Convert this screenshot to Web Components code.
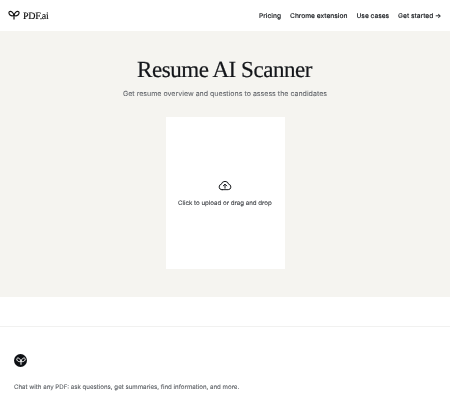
<!DOCTYPE html>
<html lang="en">
<head>
<meta charset="utf-8">
<title>Resume AI Scanner</title>
<style>
  html, body { margin: 0; background: #fff; }
  body { font-family: Inter, "Liberation Sans", sans-serif; overflow: hidden; text-rendering: geometricPrecision; }
</style>
</head>
<body>
<site-header></site-header>
<scanner-hero heading="Resume AI Scanner" sub="Get resume overview and questions to assess the candidates"></scanner-hero>
<site-footer></site-footer>

<script>
const SPROUT = `
  <path d="M12 21V12.500" />
  <path d="M12 12.500C10.500 7 6.500 4 3.500 5 1 6 1.500 10 4 12c2.500 2 6 2 8 .5z" />
  <path d="M12 12.500C13.500 7 17.500 4 20.500 5 23 6 22.500 10 20 12c-2.500 2-6 2-8 .5z" />
`;

class SiteHeader extends HTMLElement {
  constructor() {
    super();
    this.attachShadow({ mode: "open" });
  }

  connectedCallback() {
    this.shadowRoot.innerHTML = `
      <style>
        :host {
          display: flex;
          align-items: center;
          justify-content: space-between;
          box-sizing: border-box;
          height: 31px;
          padding: 1px 9px 0 8px;
          background: #fff;
        }
        .brand { display: flex; align-items: center; gap: 3px; }
        .brand svg { width: 12px; height: 12px; margin-top: -2px; fill: none; stroke: #111; stroke-width: 2.400; }
        .brand span {
          font: 400 10px "Liberation Serif", serif;
          color: #111;
          letter-spacing: -0.3px;
          -webkit-text-stroke: 0.15px #111;
          will-change: transform;
        }
        nav { display: flex; gap: 9px; will-change: transform; }
        a {
          font: 500 6.600px Inter, "Liberation Sans", sans-serif;
          color: #15181c;
          -webkit-text-stroke: 0.1px #15181c;
          text-decoration: none;
        }
      </style>
      <div class="brand">
        <svg viewBox="0 0 24 24">${SPROUT}</svg>
        <span>PDF.ai</span>
      </div>
      <nav>
        <a href="#">Pricing</a>
        <a href="#">Chrome extension</a>
        <a href="#">Use cases</a>
        <a href="#">Get started →</a>
      </nav>
    `;
  }
}

class ScannerHero extends HTMLElement {
  constructor() {
    super();
    this.attachShadow({ mode: "open" });
  }

  connectedCallback() {
    this.shadowRoot.innerHTML = `
      <style>
        :host {
          display: flex;
          flex-direction: column;
          align-items: center;
          box-sizing: border-box;
          height: 266px;
          padding-top: 25px;
          background: #f5f4f0;
        }
        h1 {
          margin: 0;
          font: 400 23px/28px "Liberation Serif", serif;
          color: #14161a;
          letter-spacing: -0.450px;
          -webkit-text-stroke: 0.2px #14161a;
          will-change: transform;
        }
        p {
          margin: 4px 0 0;
          font: 400 7.050px/12px Inter, "Liberation Sans", sans-serif;
          color: #63666b;
          -webkit-text-stroke: 0.08px #63666b;
          will-change: transform;
        }
        upload-box { margin-top: 17px; }
      </style>
      <h1>${this.getAttribute("heading")}</h1>
      <p>${this.getAttribute("sub")}</p>
      <upload-box></upload-box>
    `;
  }
}

class UploadBox extends HTMLElement {
  constructor() {
    super();
    this.attachShadow({ mode: "open" });
  }

  connectedCallback() {
    this.shadowRoot.innerHTML = `
      <style>
        :host {
          display: flex;
          flex-direction: column;
          align-items: center;
          justify-content: center;
          gap: 7px;
          width: 119px;
          height: 152px;
          background: #fff;
        }
        svg { width: 14px; height: 14px; fill: none; stroke: #15171a; stroke-width: 1.700; stroke-linecap: round; stroke-linejoin: round; }
        span { font: 400 6.150px/10px Inter, "Liberation Sans", sans-serif; color: #33363b; -webkit-text-stroke: 0.08px #33363b; white-space: nowrap; will-change: transform; }
      </style>
      <svg viewBox="0 0 24 24">
        <path d="M7 20H6.500a4.700 4.700 0 0 1-.8-9.300 6.500 6.500 0 0 1 12.600 0 4.700 4.700 0 0 1-.8 9.300H7z" />
        <path d="M12 17.500v-6.500M9 13.500l3-3 3 3" />
      </svg>
      <span>Click to upload or drag and drop</span>
    `;
  }
}

class SiteFooter extends HTMLElement {
  constructor() {
    super();
    this.attachShadow({ mode: "open" });
  }

  connectedCallback() {
    this.shadowRoot.innerHTML = `
      <style>
        :host {
          display: block;
          box-sizing: border-box;
          margin-top: 29px;
          padding: 27px 14px 0;
          border-top: 1px solid #f1f1f0;
        }
        .mark {
          display: flex;
          align-items: center;
          justify-content: center;
          width: 13px;
          height: 13px;
          border-radius: 50%;
          background: #0d1014;
        }
        .mark svg { width: 10px; height: 10px; fill: none; stroke: #fff; stroke-width: 2.400; }
        p {
          margin: 15px 0 0;
          padding-top: 1px;
          font: 400 6.150px/10px Inter, "Liberation Sans", sans-serif;
          color: #55595e;
          -webkit-text-stroke: 0.08px #55595e;
          will-change: transform;
        }
      </style>
      <div class="mark"><svg viewBox="0 0 24 24">${SPROUT}</svg></div>
      <p>Chat with any PDF: ask questions, get summaries, find information, and more.</p>
    `;
  }
}

customElements.define("site-header", SiteHeader);
customElements.define("upload-box", UploadBox);
customElements.define("scanner-hero", ScannerHero);
customElements.define("site-footer", SiteFooter);
</script>
</body>
</html>
